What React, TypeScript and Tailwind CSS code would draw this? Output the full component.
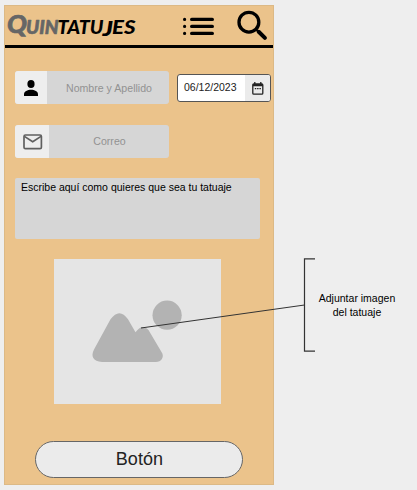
import React from "react";

function Logo() {
  return (
    <svg className="h-[32px] w-[134px] shrink-0 overflow-visible" viewBox="0 0 134 32" role="img" aria-label="Quintatujes">
      <g fontFamily="Lato, sans-serif" fontWeight="900" fontStyle="italic" strokeLinejoin="round">
        <g fill="#666666" stroke="#666666" strokeWidth="0.6">
          <text x="2" y="20.5" fontSize="24" textLength="20" lengthAdjust="spacingAndGlyphs">Q</text>
          <text x="21" y="21.5" fontSize="18.5" textLength="32.5" lengthAdjust="spacingAndGlyphs">UIN</text>
        </g>
        <g fill="#000000">
          <text x="52.5" y="21.5" fontSize="18" textLength="46" lengthAdjust="spacingAndGlyphs">TATU</text>
          <text x="97.5" y="23.5" fontSize="20.5" textLength="10.5" lengthAdjust="spacingAndGlyphs">J</text>
          <text x="107" y="21.5" fontSize="18" textLength="23.5" lengthAdjust="spacingAndGlyphs">ES</text>
        </g>
      </g>
    </svg>
  );
}

function ListIcon() {
  return (
    <svg className="h-[20px] w-[34px]" viewBox="0 0 34 20" stroke="#000" strokeLinecap="round">
      <path d="M9.7 3.4H30.3M9.7 10.4H30.3M9.7 17.4H30.3" strokeWidth="3.4" />
      <path d="M2.6 3.4h.01M2.6 10.4h.01M2.6 17.4h.01" strokeWidth="3.2" />
    </svg>
  );
}

function SearchIcon() {
  return (
    <svg className="h-[32px] w-[32px]" viewBox="0 0 32 32" fill="none" stroke="#000">
      <circle cx="12.9" cy="12.2" r="9.9" strokeWidth="3.3" />
      <path d="M19.9 19.2L22.4 21.7" strokeWidth="2.2" />
      <path d="M22.7 21.8L28.9 27.9" strokeWidth="4" strokeLinecap="round" />
    </svg>
  );
}

function PersonIcon() {
  return (
    <svg className="h-[16px] w-[14px]" viewBox="0 0 14 16">
      <ellipse cx="7" cy="4" rx="3.6" ry="4" />
      <path d="M0 16v-1.7C0 11.2 3.5 9.7 7 9.7s7 1.5 7 4.6V16z" />
    </svg>
  );
}

function MailIcon() {
  return (
    <svg className="h-[16px] w-[20px]" viewBox="0 0 20 16" fill="none" stroke="#606060" strokeWidth="1.7" strokeLinejoin="round">
      <rect x="1" y="1" width="17.4" height="13.6" rx="1.4" />
      <path d="M1.4 2.4L9.7 7.8L18 2.4" />
    </svg>
  );
}

function CalendarIcon() {
  return (
    <svg className="h-[13px] w-[12px]" viewBox="0 0 12 13" fill="none" stroke="#222">
      <rect x="0.8" y="2" width="10" height="10.2" rx="1" strokeWidth="1.3" />
      <path d="M.8 3.1h10" strokeWidth="2.4" />
      <path d="M2.8 0v2M8.8 0v2" strokeWidth="1.3" />
      <path d="M2.8 6.7h6.4" strokeWidth="1.3" strokeDasharray="1.5 .8" />
    </svg>
  );
}

export default function App() {
  return (
    <div className="relative h-[490px] w-[417px] overflow-hidden bg-[#eeeeee] pt-[5px] pl-1 font-['Liberation_Sans',Arial,sans-serif]">
      <main className="flex h-[480px] w-[270px] flex-col border border-[#dcb985] bg-[#ebc38b]">
        <header className="flex h-[42px] shrink-0 items-start border-b-[3px] border-black">
          <div className="pt-[6px]"><Logo /></div>
          <div className="ml-[43px] pt-[10px]"><ListIcon /></div>
          <div className="ml-[20px] pt-[4px]"><SearchIcon /></div>
        </header>

        <div className="ml-[10px] mt-[23px] flex h-[33px] items-start">
          <label className="flex h-[33px] w-[154px] overflow-hidden rounded-[3px] bg-[#d6d6d6]">
            <span className="flex w-[32px] items-center justify-center bg-[#eeeeee]"><PersonIcon /></span>
            <span className="flex flex-1 items-center justify-center whitespace-nowrap pl-[2px] pt-[2px] text-[10.6px] text-[#929292]">Nombre y Apellido</span>
          </label>
          <label className="ml-[8px] mt-[3px] flex h-[28px] w-[94px] overflow-hidden rounded-[3px] border border-[#555] bg-white">
            <span className="flex flex-1 items-center pl-[6px] text-[10.5px] text-[#222]">06/12/2023</span>
            <span className="flex w-[25px] items-center justify-center bg-[#ebebeb]"><CalendarIcon /></span>
          </label>
        </div>

        <label className="ml-[10px] mt-[21px] flex h-[33px] w-[154px] shrink-0 overflow-hidden rounded-[3px] bg-[#d6d6d6]">
          <span className="flex w-[34px] items-center justify-center bg-[#eeeeee] pl-[2px]"><MailIcon /></span>
          <span className="flex flex-1 items-center justify-center pl-[1px] text-[10.6px] text-[#929292]">Correo</span>
        </label>

        <div className="ml-[10px] mt-[20px] h-[61px] w-[245px] shrink-0 rounded-[2px] bg-[#d6d6d6] pl-[6px] pt-[3px] text-[10.5px] leading-[13px] whitespace-nowrap text-black">
          Escribe aquí como quieres que sea tu tatuaje
        </div>

        <div className="ml-[49.4px] mt-[20px] h-[145px] w-[166.6px] shrink-0 bg-[#e5e5e5]">
          <svg className="h-[145px] w-[166px]" viewBox="0 0 166 145" fill="#b3b3b3">
            <circle cx="113.1" cy="56.2" r="14.6" />
            <path d="M56.5 60.3Q65.5 48 74 60.3L81.5 73.3Q88.5 64 94.5 71L107.5 93C111 98 107 103 102 103H48C39 102.5 36.5 97 40 90.5Z" />
          </svg>
        </div>

        <button className="ml-[30.4px] mt-[37.4px] flex h-[37px] w-[208px] shrink-0 items-center justify-center rounded-full border border-[#666] bg-[#ebebeb] text-[18px] text-[#222]">Botón</button>
      </main>

      <svg className="pointer-events-none absolute left-0 top-0 h-[490px] w-[417px]" viewBox="0 0 417 490" fill="none" stroke="#333">
        <path d="M141 328L304.5 305" strokeWidth="1" />
        <path d="M315 258.9H304.5V351.1H315" strokeWidth="1.2" />
      </svg>
      <div className="absolute left-[307px] top-[291px] w-[100px] text-center text-[10.5px] leading-[14px] text-black">
        Adjuntar imagen<br />del tatuaje
      </div>
    </div>
  );
}
